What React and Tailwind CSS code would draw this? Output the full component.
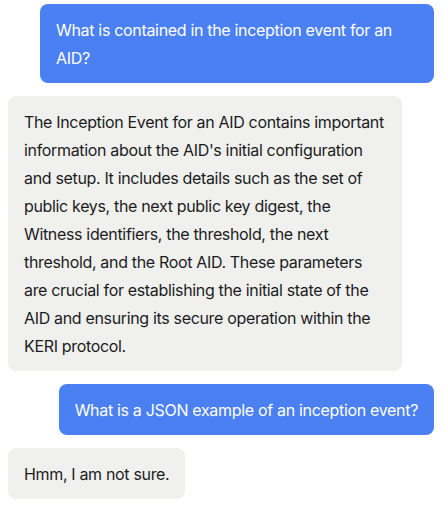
import React from 'react';

const messages = [
  { role: 'user', text: 'What is contained in the inception event for an AID?' },
  {
    role: 'assistant',
    text: "The Inception Event for an AID contains important information about the AID's initial configuration and setup. It includes details such as the set of public keys, the next public key digest, the Witness identifiers, the threshold, the next threshold, and the Root AID. These parameters are crucial for establishing the initial state of the AID and ensuring its secure operation within the KERI protocol.",
  },
  { role: 'user', text: 'What is a JSON example of an inception event?' },
  { role: 'assistant', text: 'Hmm, I am not sure.' },
];

const Bubble = ({ role, text }) => {
  const isUser = role === 'user';
  return (
    <div className={`flex ${isUser ? 'justify-end' : 'justify-start'}`}>
      <div
        className={`max-w-[394px] rounded-lg px-4 py-[11.5px] text-base leading-7 ${
          isUser
            ? 'bg-[#4b80f2] text-white tracking-[-0.02em]'
            : 'bg-[#f0f0ef] text-[#1c1c1c] tracking-[-0.021em]'
        }`}
      >
        {text}
      </div>
    </div>
  );
};

export default function App() {
  return (
    <div className="w-[444px] h-[510px] bg-white font-['Inter',sans-serif] pl-2 pr-[10px] pt-1 flex flex-col gap-[13px]">
      {messages.map((m, i) => (
        <Bubble key={i} role={m.role} text={m.text} />
      ))}
    </div>
  );
}
